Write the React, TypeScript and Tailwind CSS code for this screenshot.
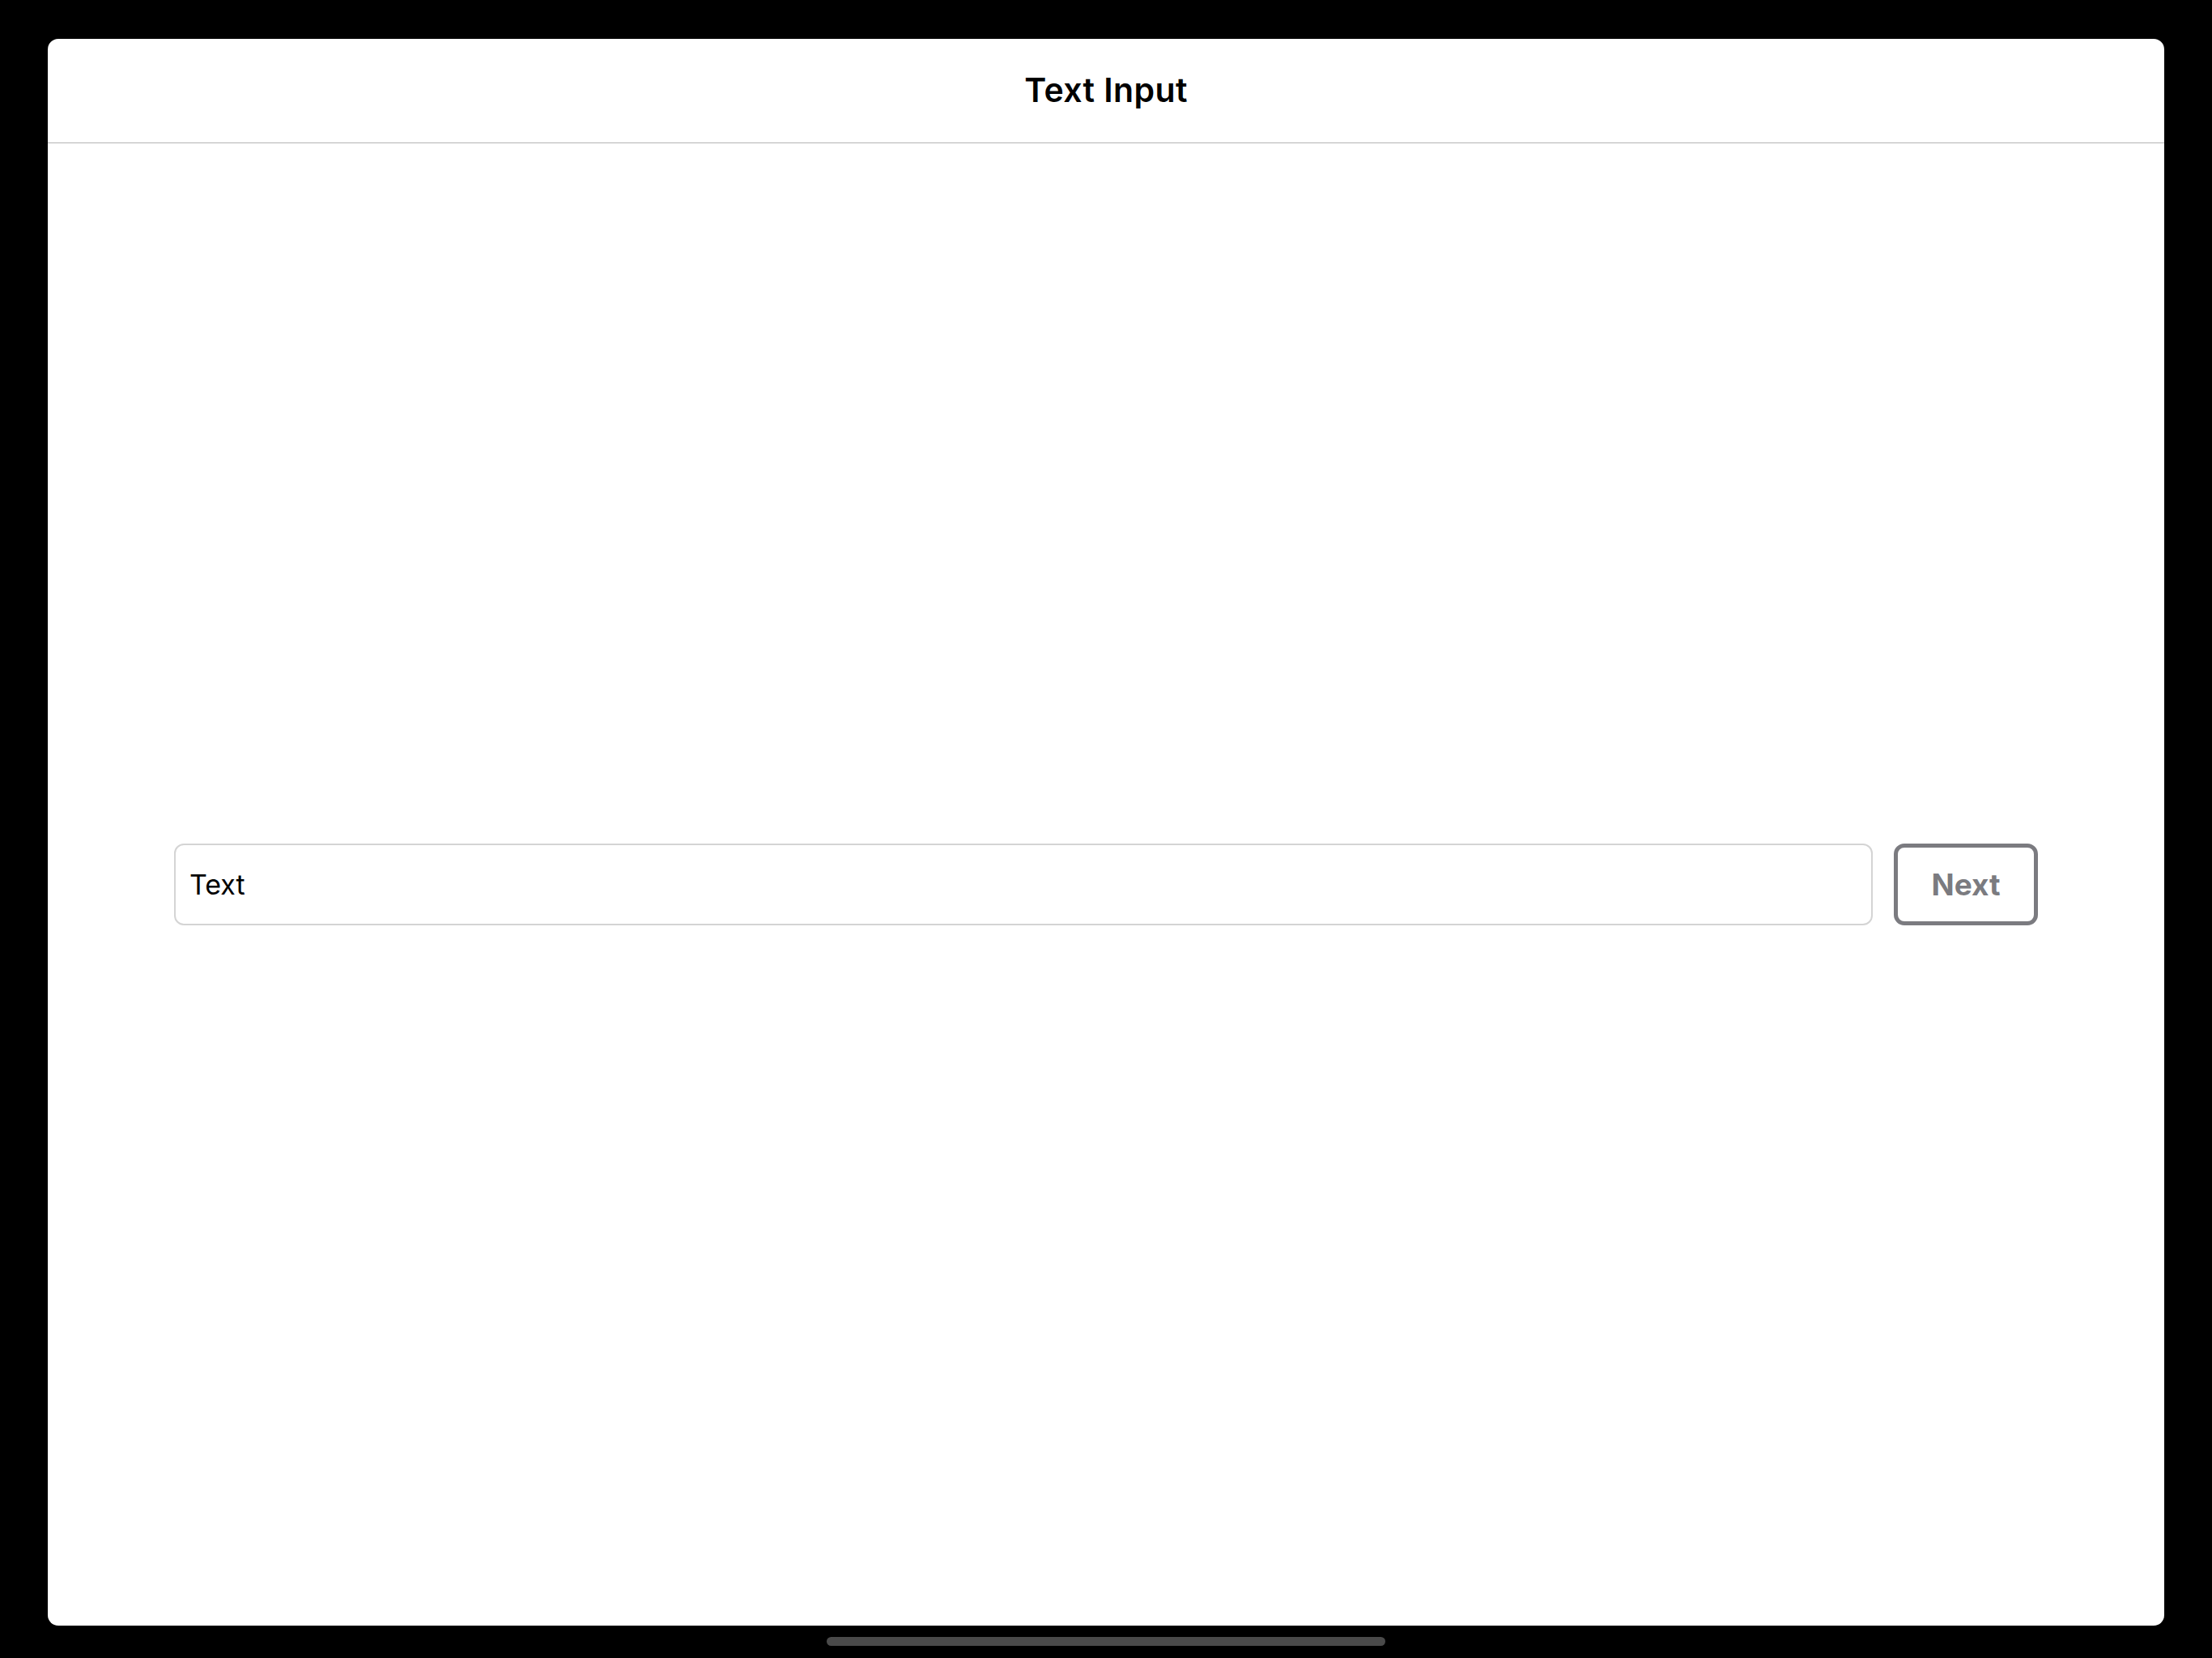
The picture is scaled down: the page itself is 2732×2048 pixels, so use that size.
export default function App() {
  return (
    <div className="flex h-[2048px] w-[2732px] flex-col items-center bg-black pt-[48px] font-['Inter',sans-serif]">
      <div className="flex h-[1960px] w-[2614px] flex-col overflow-hidden rounded-[13px] bg-white">
        <header className="flex h-[129px] shrink-0 items-center justify-center border-b border-[#b4b4b4]">
          <h1 className="text-[41px] font-semibold tracking-[0.4px] text-black">Text Input</h1>
        </header>

        <main className="flex flex-1 items-center gap-[26px] px-[156px]">
          <div className="-mt-[1px] flex h-[101px] flex-1 items-center rounded-[12px] border-2 border-[#d4d4d4] pl-[17px]">
            <span className="text-[34px] text-black">Text</span>
          </div>
          <button
            type="button"
            className="flex h-[101px] w-[178px] items-center justify-center rounded-[13px] border-[5px] border-[#7b7b80] text-[37px] font-bold text-[#7b7b80]"
          >
            Next
          </button>
        </main>
      </div>
      <div className="mt-[14px] h-[11px] w-[690px] rounded-full bg-[#4a4a4a]" />
    </div>
  );
}
